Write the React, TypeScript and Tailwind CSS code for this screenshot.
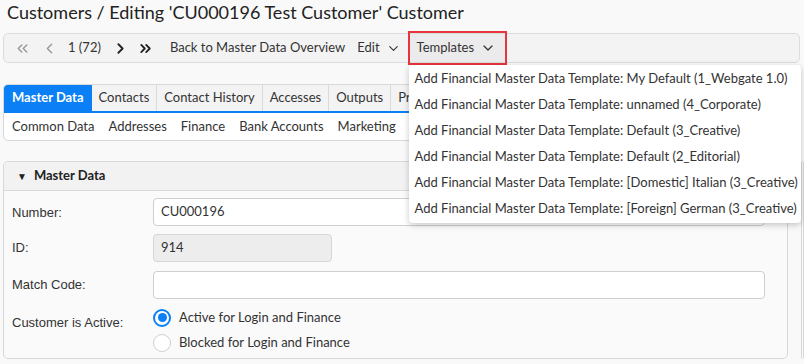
import { ChevronDown, ChevronLeft, ChevronRight, ChevronsLeft, ChevronsRight } from "lucide-react";

const templates = [
  "My Default (1_Webgate 1.0)",
  "unnamed (4_Corporate)",
  "Default (3_Creative)",
  "Default (2_Editorial)",
  "[Domestic] Italian (3_Creative)",
  "[Foreign] German (3_Creative)",
];

const tabs = ["Contacts", "Contact History", "Accesses", "Outputs", "Properties"];
const subTabs = ["Common Data", "Addresses", "Finance", "Bank Accounts", "Marketing"];

export default function App() {
  return (
    <div className="w-[804px] h-[364px] overflow-hidden bg-[#f9f9f9] font-['Lato',sans-serif] text-[13px] text-[#333]">
      {/* Title */}
      <h1 className="pl-[7px] text-[18px] leading-[24px] text-[#222]">
        Customers / Editing 'CU000196 Test Customer' Customer
      </h1>

      {/* Toolbar */}
      <div className="ml-[3px] mr-[4px] mt-[9px] h-[30px] flex items-center rounded-[5px] border border-[#dcdcdc] bg-[#f3f3f3]">
        <ChevronsLeft size={17} strokeWidth={2} className="ml-[10px] text-[#999]" />
        <ChevronLeft size={17} strokeWidth={2} className="ml-[10px] text-[#999]" />
        <span className="ml-[10px]">1 (72)</span>
        <ChevronRight size={17} strokeWidth={2.6} className="ml-[11px] text-[#222]" />
        <ChevronsRight size={17} strokeWidth={2.6} className="ml-[8px] text-[#222]" />
        <span className="ml-[16px]">Back to Master Data Overview</span>
        <span className="ml-[12px]">Edit</span>
        <ChevronDown size={15} strokeWidth={1.8} className="ml-[6px]" />
        <div className="relative ml-[8px] h-[28px] flex items-center pl-[8px] pr-[10px] bg-[#ebebeb]">
          <span>Templates</span>
          <ChevronDown size={16} strokeWidth={1.9} className="ml-[6px]" />
          <div className="absolute left-[-1px] right-[-1px] top-[-3px] bottom-[-3px] border-2 border-[#e8343c]" />
          {/* Dropdown */}
          <div className="absolute left-0 top-[31px] z-10 w-[392px] rounded-[4px] bg-white py-[1px] shadow-[0_2px_6px_rgba(0,0,0,0.22)]">
            {templates.map((t) => (
              <div key={t} className="h-[26px] flex items-center pl-[6px] whitespace-nowrap">
                Add Financial Master Data Template: {t}
              </div>
            ))}
          </div>
        </div>
      </div>

      {/* Tabs */}
      <div className="ml-[3px] mt-[21px] w-[798px] rounded-[5px] border border-[#d8d8d8] bg-white overflow-hidden">
        <div className="flex h-[28px] border-b-2 border-[#0b7ff5] bg-[#f3f3f3]">
          <div className="flex items-center px-[8px] bg-[#0b7ff5] text-white font-bold">Master Data</div>
          {tabs.map((t) => (
            <div key={t} className="flex items-center px-[7px] border-r border-[#dadada] whitespace-nowrap">
              {t}
            </div>
          ))}
        </div>
        <div className="flex h-[27px] items-center gap-[14px] pl-[8px]">
          {subTabs.map((t) => (
            <span key={t}>{t}</span>
          ))}
        </div>
      </div>

      {/* Content */}
      <div className="mt-[20px] flex gap-[13px] pl-[3px]">
        <div className="w-[785px] h-[198px] rounded-[5px] border border-[#d8d8d8] bg-[#fafafa]">
          <div className="h-[29px] flex items-center gap-[7px] pl-[13px] border-b border-[#dadada] bg-[#f2f2f2] rounded-t-[5px]">
            <span className="text-[10px] text-[#222]">▼</span>
            <span className="font-bold text-[#222]">Master Data</span>
          </div>
          <div className="pt-[7px] font-['Liberation_Sans',sans-serif] text-[13px]">
            <div className="flex items-center h-[28px]">
              <span className="w-[149px] pl-[8px] pt-[2px]">Number:</span>
              <div className="w-[612px] h-[28px] flex items-center pl-[7px] rounded-[4px] border border-[#cfcfcf] bg-white font-['Lato',sans-serif]">
                CU000196
              </div>
            </div>
            <div className="mt-[8px] flex items-center h-[28px]">
              <span className="w-[149px] pl-[8px]">ID:</span>
              <div className="w-[179px] h-[28px] flex items-center pl-[7px] rounded-[4px] border border-[#d6d6d6] bg-[#ededed] font-['Lato',sans-serif]">
                914
              </div>
            </div>
            <div className="mt-[9px] flex items-center h-[28px]">
              <span className="w-[149px] pl-[8px]">Match Code:</span>
              <div className="w-[612px] h-[28px] rounded-[4px] border border-[#cfcfcf] bg-white" />
            </div>
            <div className="mt-[6px] flex">
              <span className="w-[149px] pl-[8px] pt-[8px]">Customer is Active:</span>
              <div className="font-['Lato',sans-serif]">
                <div className="flex items-center h-[25px] gap-[8px]">
                  <span className="w-[18px] h-[18px] rounded-full border-2 border-[#0b7ff5] flex items-center justify-center bg-white">
                    <span className="w-[9px] h-[9px] rounded-full bg-[#0b7ff5]" />
                  </span>
                  <span>Active for Login and Finance</span>
                </div>
                <div className="flex items-center h-[25px] gap-[8px]">
                  <span className="w-[18px] h-[18px] rounded-full border border-[#cfcfcf] bg-white" />
                  <span>Blocked for Login and Finance</span>
                </div>
              </div>
            </div>
          </div>
        </div>
        <div className="flex-1 h-[198px] rounded-[5px] border border-[#d8d8d8] bg-[#fafafa]" />
      </div>
    </div>
  );
}
